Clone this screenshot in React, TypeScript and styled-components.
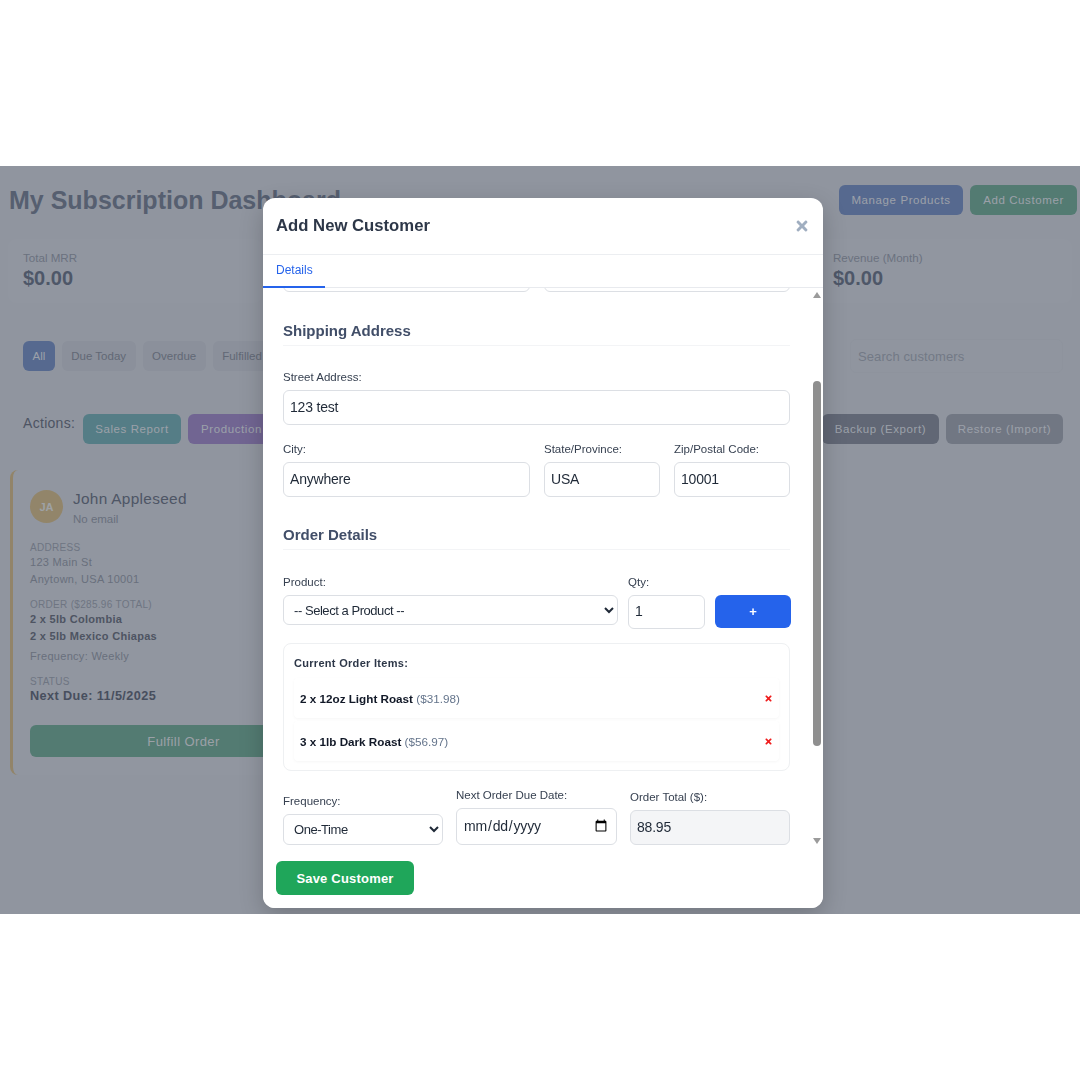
import React from "react";
import styled, { createGlobalStyle } from "styled-components";
import { FaTimes } from "react-icons/fa";

const GlobalStyle = createGlobalStyle`
  html, body {
    margin: 0;
    padding: 0;
    background: #fff;
    font-family: "Liberation Sans", Arial, sans-serif;
  }
  * {
    box-sizing: border-box;
  }
`;

const Stage = styled.div`
  position: relative;
  margin-top: 166px;
  height: 748px;
  overflow: hidden;
  background: #c2c5cb;
`;

const Dashboard = styled.div`
  padding: 19px 3px 0 8px;
  display: flex;
  flex-direction: column;
`;

const TopBar = styled.div`
  display: flex;
  justify-content: space-between;
  align-items: flex-start;
`;

const Title = styled.h1`
  margin: 0;
  font-size: 25px;
  line-height: 31px;
  font-weight: 700;
  color: #6f7787;
  padding-left: 1px;
`;

const HeaderActions = styled.div`
  display: flex;
  gap: 7px;
`;

const ActionButton = styled.div<{ $bg: string; $w: number }>`
  width: ${(p) => p.$w}px;
  height: 30px;
  border-radius: 6px;
  background: ${(p) => p.$bg};
  color: #d2d5d9;
  font-size: 11.5px;
  letter-spacing: 0.6px;
  display: flex;
  align-items: center;
  justify-content: center;
  flex-shrink: 0;
`;

const ClippedActionButton = styled(ActionButton)`
  justify-content: flex-start;
  padding-left: 13px;
`;

const StatsGrid = styled.div`
  display: grid;
  grid-template-columns: repeat(4, 254px);
  gap: 16px;
  margin-top: 23px;
`;

const StatCard = styled.div`
  height: 64px;
  padding: 11px 15px;
  border-radius: 8px;
  background: #c3c6cc;
`;

const StatLabel = styled.div`
  font-size: 11.6px;
  line-height: 15px;
  color: #8d929c;
`;

const StatValue = styled.div`
  font-size: 20px;
  line-height: 24px;
  font-weight: 700;
  color: #646c7c;
  margin-top: 1px;
`;

const FilterRow = styled.div`
  display: flex;
  align-items: center;
  justify-content: space-between;
  margin: 33px 14px 0 15px;
  height: 40px;
`;

const Pills = styled.div`
  display: flex;
  gap: 7px;
`;

const Pill = styled.div<{ $active?: boolean }>`
  height: 30px;
  padding: 0 9.5px;
  border-radius: 6px;
  font-size: 11.5px;
  display: flex;
  align-items: center;
  background: ${(p) => (p.$active ? "#6f86b3" : "#babdc4")};
  color: ${(p) => (p.$active ? "#d2d5d9" : "#80858f")};
`;

const SearchBox = styled.div`
  width: 213px;
  height: 34px;
  padding: 0 7px;
  border-radius: 6px;
  border: 1px solid #bfc2c8;
  font-size: 13px;
  letter-spacing: 0.1px;
  color: #989da6;
  display: flex;
  align-items: center;
`;

const ActionsRow = styled.div`
  display: flex;
  align-items: center;
  margin: 38px 14px 0 15px;
  height: 30px;
`;

const ActionsLabel = styled.div`
  font-size: 14px;
  letter-spacing: 0.3px;
  color: #626874;
  width: 60px;
  margin-top: -12px;
`;

const ActionGroup = styled.div`
  display: flex;
  gap: 7px;
`;

const ActionGroupEnd = styled(ActionGroup)`
  margin-left: auto;
`;

const CustomerCard = styled.div`
  width: 344px;
  height: 305px;
  margin: 26px 0 0 2px;
  padding: 20px 17px 0;
  border-left: 3px solid #c4ad7d;
  border-radius: 8px;
  background: #c3c6cc;
`;

const CustomerHead = styled.div`
  display: flex;
  gap: 10px;
`;

const Avatar = styled.div`
  width: 33px;
  height: 33px;
  border-radius: 50%;
  background: #c4ae7e;
  color: #d6d6d3;
  font-size: 11px;
  font-weight: 700;
  display: flex;
  align-items: center;
  justify-content: center;
  flex-shrink: 0;
`;

const CustomerName = styled.div`
  font-size: 15.4px;
  line-height: 18px;
  letter-spacing: 0.3px;
  color: #646a78;
`;

const CustomerEmail = styled.div`
  font-size: 11.5px;
  line-height: 14px;
  margin-top: 4px;
  color: #8a8f99;
`;

const InfoLabel = styled.div<{ $top: number }>`
  font-size: 10px;
  line-height: 12px;
  letter-spacing: 0.3px;
  color: #9297a1;
  margin-top: ${(p) => p.$top}px;
`;

const InfoLine = styled.div<{ $strong?: boolean }>`
  font-size: 11px;
  line-height: 17px;
  letter-spacing: 0.3px;
  color: ${(p) => (p.$strong ? "#636873" : "#8a8f99")};
  font-weight: ${(p) => (p.$strong ? 700 : 400)};
`;

const FrequencyLine = styled(InfoLine)`
  margin-top: 3px;
`;

const DueLine = styled.div`
  font-size: 12.7px;
  line-height: 16px;
  letter-spacing: 0.4px;
  font-weight: 700;
  color: #5a606e;
`;

const FulfillButton = styled.div`
  height: 32px;
  margin-top: 21px;
  border-radius: 6px;
  background: #6b9f8a;
  color: #d2d5d6;
  font-size: 13px;
  letter-spacing: 0.4px;
  display: flex;
  align-items: center;
  justify-content: center;
`;

const Overlay = styled.div`
  position: absolute;
  inset: 0;
  background: rgba(30, 40, 60, 0.3);
  backdrop-filter: blur(0.6px);
`;

const Modal = styled.div`
  position: absolute;
  left: 263px;
  top: 32px;
  width: 560px;
  height: 710px;
  border-radius: 12px;
  background: #fff;
  box-shadow: 0 8px 24px rgba(0, 0, 0, 0.2);
  display: flex;
  flex-direction: column;
  overflow: hidden;
`;

const ModalHeader = styled.div`
  height: 57px;
  flex-shrink: 0;
  padding: 0 13px;
  border-bottom: 1px solid #eceef1;
  display: flex;
  align-items: center;
  justify-content: space-between;
`;

const ModalTitle = styled.h2`
  margin: 0;
  font-size: 16.7px;
  font-weight: 700;
  color: #2d3748;
`;

const CloseIcon = styled(FaTimes)`
  width: 16px;
  height: 16px;
  color: #a0aec0;
`;

const Tabs = styled.div`
  height: 33px;
  flex-shrink: 0;
  display: flex;
  border-bottom: 1px solid #e8eaee;
`;

const Tab = styled.div`
  width: 62px;
  height: 33px;
  padding-left: 13px;
  border-bottom: 2px solid #2563eb;
  color: #2563eb;
  font-size: 12px;
  line-height: 31px;
`;

const ModalBody = styled.div`
  flex: 1;
  min-height: 0;
  display: flex;
`;

const Scroller = styled.div`
  flex: 1;
  min-width: 0;
  overflow: hidden;
  padding: 0 23px 0 20px;
`;

const ScrollTrack = styled.div`
  width: 10px;
  flex-shrink: 0;
  display: flex;
  flex-direction: column;
  align-items: flex-start;
`;

const ArrowUp = styled.div`
  width: 0;
  height: 0;
  margin: 4px 0 0 0;
  border-left: 4px solid transparent;
  border-right: 4px solid transparent;
  border-bottom: 6px solid #9b9b9b;
`;

const Thumb = styled.div`
  width: 8px;
  height: 365px;
  margin-top: 83px;
  border-radius: 4px;
  background: #8f8f8f;
`;

const ArrowDown = styled.div`
  width: 0;
  height: 0;
  margin-top: 92px;
  border-left: 4px solid transparent;
  border-right: 4px solid transparent;
  border-top: 6px solid #9b9b9b;
`;

const Row = styled.div<{ $top: number; $gap?: number; $end?: boolean }>`
  display: flex;
  gap: ${(p) => p.$gap ?? 14}px;
  margin-top: ${(p) => p.$top}px;
  align-items: ${(p) => (p.$end ? "flex-end" : "stretch")};
`;

const ClippedRow = styled(Row)`
  margin-top: -31px;
`;

const ProductRow = styled(Row)`
  align-items: flex-start;
`;

const Field = styled.label<{ $w?: number }>`
  display: flex;
  flex-direction: column;
  justify-content: flex-end;
  flex: ${(p) => (p.$w ? `0 0 ${p.$w}px` : "1 1 0")};
  min-width: 0;
`;

const FieldLabel = styled.span`
  font-size: 11.5px;
  line-height: 14px;
  color: #374151;
  margin-bottom: 6px;
`;

const Input = styled.input<{ $h?: number }>`
  width: 100%;
  height: ${(p) => p.$h ?? 35}px;
  padding: 0 6px 2px;
  border: 1px solid #dcdfe4;
  border-radius: 6px;
  background: #fff;
  color: #1f2937;
  font-family: "Liberation Sans", Arial, sans-serif;
  font-size: 14px;
  letter-spacing: -0.2px;
  outline: none;
  &:read-only {
    background: #f4f5f7;
  }
`;

const Select = styled.select`
  width: 100%;
  height: 30px;
  padding: 0 6px;
  border: 1px solid #dcdfe4;
  border-radius: 6px;
  background: #fff;
  color: #1f2937;
  font-family: "Liberation Sans", Arial, sans-serif;
  font-size: 13px;
  letter-spacing: -0.45px;
  outline: none;
`;

const FrequencySelect = styled(Select)`
  height: 31px;
`;

const SectionHeading = styled.h3<{ $top: number }>`
  margin: ${(p) => p.$top}px 0 0;
  padding-bottom: 5px;
  border-bottom: 1px solid #f3f4f6;
  font-size: 15px;
  line-height: 18px;
  font-weight: 700;
  color: #414e68;
`;

const AddButton = styled.div`
  flex: 0 0 76px;
  height: 33px;
  margin-top: 20px;
  border-radius: 6px;
  background: #2563eb;
  color: #fff;
  font-size: 13px;
  font-weight: 700;
  display: flex;
  align-items: center;
  justify-content: center;
`;

const ItemsBox = styled.div`
  margin-top: 14px;
  height: 128px;
  padding: 12px 10px;
  border: 1px solid #eef0f2;
  border-radius: 8px;
`;

const ItemsTitle = styled.div`
  font-size: 11px;
  line-height: 14px;
  font-weight: 700;
  letter-spacing: 0.3px;
  color: #2d3748;
  margin-bottom: 8px;
`;

const ItemRow = styled.div`
  height: 40px;
  margin-bottom: 3px;
  padding: 0 6px;
  border-radius: 4px;
  background: #fff;
  box-shadow: 0 1px 3px rgba(0, 0, 0, 0.04);
  display: flex;
  align-items: center;
  justify-content: space-between;
`;

const ItemText = styled.div`
  font-size: 11.7px;
  font-weight: 700;
  color: #111827;
`;

const ItemPrice = styled.span`
  font-weight: 400;
  color: #64748b;
`;

const RemoveIcon = styled(FaTimes)`
  width: 9px;
  height: 9px;
  color: #ef1c1c;
`;

const ModalFooter = styled.div`
  height: 58px;
  flex-shrink: 0;
  padding: 11px 13px;
  background: #fff;
`;

const SaveButton = styled.div`
  width: 138px;
  height: 34px;
  border-radius: 6px;
  background: #1fa65a;
  color: #fff;
  font-size: 13px;
  font-weight: 700;
  letter-spacing: 0.2px;
  display: flex;
  align-items: center;
  justify-content: center;
`;

const App = () => (
  <>
    <GlobalStyle />
    <Stage>
      <Dashboard>
        <TopBar>
          <Title>My Subscription Dashboard</Title>
          <HeaderActions>
            <ActionButton $bg="#6f86b3" $w={124}>Manage Products</ActionButton>
            <ActionButton $bg="#6b9f8a" $w={107}>Add Customer</ActionButton>
          </HeaderActions>
        </TopBar>
        <StatsGrid>
          <StatCard>
            <StatLabel>Total MRR</StatLabel>
            <StatValue>$0.00</StatValue>
          </StatCard>
          <StatCard />
          <StatCard />
          <StatCard>
            <StatLabel>Revenue (Month)</StatLabel>
            <StatValue>$0.00</StatValue>
          </StatCard>
        </StatsGrid>
        <FilterRow>
          <Pills>
            <Pill $active>All</Pill>
            <Pill>Due Today</Pill>
            <Pill>Overdue</Pill>
            <Pill>Fulfilled</Pill>
          </Pills>
          <SearchBox>Search customers</SearchBox>
        </FilterRow>
        <ActionsRow>
          <ActionsLabel>Actions:</ActionsLabel>
          <ActionGroup>
            <ActionButton $bg="#6ea3a6" $w={98}>Sales Report</ActionButton>
            <ClippedActionButton $bg="#9580b8" $w={120}>Production</ClippedActionButton>
          </ActionGroup>
          <ActionGroupEnd>
            <ActionButton $bg="#7e838e" $w={117}>Backup (Export)</ActionButton>
            <ActionButton $bg="#969aa3" $w={117}>Restore (Import)</ActionButton>
          </ActionGroupEnd>
        </ActionsRow>
        <CustomerCard>
          <CustomerHead>
            <Avatar>JA</Avatar>
            <div>
              <CustomerName>John Appleseed</CustomerName>
              <CustomerEmail>No email</CustomerEmail>
            </div>
          </CustomerHead>
          <InfoLabel $top={16}>ADDRESS</InfoLabel>
          <InfoLine>123 Main St</InfoLine>
          <InfoLine>Anytown, USA 10001</InfoLine>
          <InfoLabel $top={11}>ORDER ($285.96 TOTAL)</InfoLabel>
          <InfoLine $strong>2 x 5lb Colombia</InfoLine>
          <InfoLine $strong>2 x 5lb Mexico Chiapas</InfoLine>
          <FrequencyLine>Frequency: Weekly</FrequencyLine>
          <InfoLabel $top={11}>STATUS</InfoLabel>
          <DueLine>Next Due: 11/5/2025</DueLine>
          <FulfillButton>Fulfill Order</FulfillButton>
        </CustomerCard>
      </Dashboard>
      <Overlay />
      <Modal>
        <ModalHeader>
          <ModalTitle>Add New Customer</ModalTitle>
          <CloseIcon />
        </ModalHeader>
        <Tabs>
          <Tab>Details</Tab>
        </Tabs>
        <ModalBody>
          <Scroller>
            <ClippedRow $top={0}>
              <Field><Input /></Field>
              <Field><Input /></Field>
            </ClippedRow>
            <SectionHeading $top={30}>Shipping Address</SectionHeading>
            <Row $top={24}>
              <Field>
                <FieldLabel>Street Address:</FieldLabel>
                <Input defaultValue="123 test" />
              </Field>
            </Row>
            <Row $top={17}>
              <Field>
                <FieldLabel>City:</FieldLabel>
                <Input defaultValue="Anywhere" />
              </Field>
              <Field $w={116}>
                <FieldLabel>State/Province:</FieldLabel>
                <Input defaultValue="USA" />
              </Field>
              <Field $w={116}>
                <FieldLabel>Zip/Postal Code:</FieldLabel>
                <Input defaultValue="10001" />
              </Field>
            </Row>
            <SectionHeading $top={29}>Order Details</SectionHeading>
            <ProductRow $top={25} $gap={10}>
              <Field $w={335}>
                <FieldLabel>Product:</FieldLabel>
                <Select>
                  <option>-- Select a Product --</option>
                </Select>
              </Field>
              <Field $w={77}>
                <FieldLabel>Qty:</FieldLabel>
                <Input $h={34} defaultValue="1" />
              </Field>
              <AddButton>+</AddButton>
            </ProductRow>
            <ItemsBox>
              <ItemsTitle>Current Order Items:</ItemsTitle>
              <ItemRow>
                <ItemText>2 x 12oz Light Roast <ItemPrice>($31.98)</ItemPrice></ItemText>
                <RemoveIcon />
              </ItemRow>
              <ItemRow>
                <ItemText>3 x 1lb Dark Roast <ItemPrice>($56.97)</ItemPrice></ItemText>
                <RemoveIcon />
              </ItemRow>
            </ItemsBox>
            <Row $top={17} $gap={13} $end>
              <Field $w={160}>
                <FieldLabel>Frequency:</FieldLabel>
                <FrequencySelect>
                  <option>One-Time</option>
                </FrequencySelect>
              </Field>
              <Field $w={161}>
                <FieldLabel>Next Order Due Date:</FieldLabel>
                <Input $h={37} type="date" />
              </Field>
              <Field>
                <FieldLabel>Order Total ($):</FieldLabel>
                <Input readOnly defaultValue="88.95" />
              </Field>
            </Row>
          </Scroller>
          <ScrollTrack>
            <ArrowUp />
            <Thumb />
            <ArrowDown />
          </ScrollTrack>
        </ModalBody>
        <ModalFooter>
          <SaveButton>Save Customer</SaveButton>
        </ModalFooter>
      </Modal>
    </Stage>
  </>
);

export default App;
